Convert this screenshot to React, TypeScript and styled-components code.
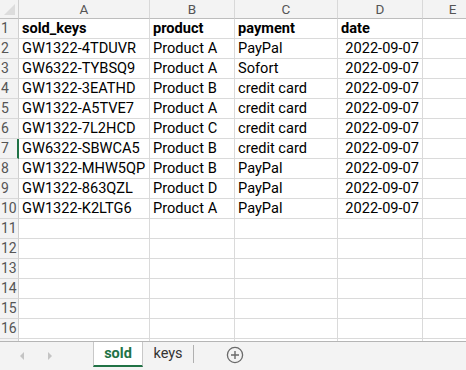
import styled, { createGlobalStyle } from "styled-components";

const GlobalStyle = createGlobalStyle`
  html, body {
    margin: 0;
    padding: 0;
    background: #ffffff;
  }
  body {
    font-family: Roboto, "Liberation Sans", Arial, sans-serif;
  }
`;

interface Sale {
  key: string;
  product: string;
  payment: string;
  date: string;
}

const rows: Sale[] = [
  { key: "GW1322-4TDUVR", product: "Product A", payment: "PayPal", date: "2022-09-07" },
  { key: "GW6322-TYBSQ9", product: "Product A", payment: "Sofort", date: "2022-09-07" },
  { key: "GW1322-3EATHD", product: "Product B", payment: "credit card", date: "2022-09-07" },
  { key: "GW1322-A5TVE7", product: "Product A", payment: "credit card", date: "2022-09-07" },
  { key: "GW1322-7L2HCD", product: "Product C", payment: "credit card", date: "2022-09-07" },
  { key: "GW6322-SBWCA5", product: "Product B", payment: "credit card", date: "2022-09-07" },
  { key: "GW1322-MHW5QP", product: "Product B", payment: "PayPal", date: "2022-09-07" },
  { key: "GW1322-863QZL", product: "Product D", payment: "PayPal", date: "2022-09-07" },
  { key: "GW1322-K2LTG6", product: "Product A", payment: "PayPal", date: "2022-09-07" },
];

const columns = ["A", "B", "C", "D", "E"];
const visibleRows = 16;

export default function App() {
  const body: (string | null)[][] = [];
  body.push(["sold_keys", "product", "payment", "date", null]);
  rows.forEach((r) => body.push([r.key, r.product, r.payment, r.date, null]));
  // one extra row that is only partly visible at the bottom edge
  while (body.length < visibleRows + 1) body.push([null, null, null, null, null]);

  return (
    <>
      <GlobalStyle />
      <Window>
        <Sheet>
          <Grid>
            <Corner>
              <svg width="18" height="18" viewBox="0 0 18 18">
                <polygon points="15,4 15,15 4,15" fill="#dcdcdc" />
              </svg>
            </Corner>
            {columns.map((c) => (
              <ColHead key={c}>{c}</ColHead>
            ))}
            {body.map((cells, i) => (
              <Row key={i}>
                <RowHead $active={i === 6}>{i < visibleRows ? i + 1 : ""}</RowHead>
                {cells.map((v, j) => (
                  <Cell key={j} $bold={i === 0} $right={i > 0 && j === 3}>
                    {v}
                  </Cell>
                ))}
              </Row>
            ))}
          </Grid>
        </Sheet>
        <TabBar>
          <Arrows>
            <svg width="8" height="10" viewBox="0 0 8 10">
              <polygon points="6,1 2,5 6,9" fill="#c4c4c4" />
            </svg>
            <svg width="8" height="10" viewBox="0 0 8 10">
              <polygon points="2,1 6,5 2,9" fill="#c4c4c4" />
            </svg>
          </Arrows>
          <Tab $active>sold</Tab>
          <Tab>keys</Tab>
          <Divider />
          <AddButton>
            <svg width="18" height="18" viewBox="0 0 18 18">
              <circle cx="9" cy="9" r="7.6" fill="none" stroke="#6a6a6a" strokeWidth="1.3" />
              <path d="M9 5v8M5 9h8" stroke="#6a6a6a" strokeWidth="1.4" />
            </svg>
          </AddButton>
        </TabBar>
      </Window>
    </>
  );
}

const Window = styled.div`
  width: 466px;
  height: 370px;
  display: flex;
  flex-direction: column;
  overflow: hidden;
  background: #ffffff;
`;

const Sheet = styled.div`
  height: 341px;
  overflow: hidden;
  border-bottom: 1px solid #b5b5b5;
`;

const Grid = styled.div`
  display: grid;
  grid-template-columns: 19px 131px 85px 103px 85px 60px;
  grid-auto-rows: 20px;
  grid-template-rows: 19px;
`;

const Row = styled.div`
  display: contents;
`;

const Corner = styled.div`
  background: #f3f3f3;
  border-right: 1px solid #cfcfcf;
  border-bottom: 1px solid #bdbdbd;
  box-sizing: border-box;
  display: flex;
`;

const ColHead = styled.div`
  background: #f3f3f3;
  border-right: 1px solid #d8d8d8;
  border-bottom: 1px solid #bdbdbd;
  box-sizing: border-box;
  color: #555555;
  font-size: 13.5px;
  line-height: 18px;
  text-align: center;
`;

const RowHead = styled.div<{ $active?: boolean }>`
  background: #f3f3f3;
  border-right: ${(p) => (p.$active ? "2px solid #217346" : "1px solid #cfcfcf")};
  border-bottom: 1px solid #d8d8d8;
  box-sizing: border-box;
  color: #555555;
  font-size: 14px;
  line-height: 19px;
  padding-left: 1px;
`;

const Cell = styled.div<{ $bold?: boolean; $right?: boolean }>`
  border-right: 1px solid #dadada;
  border-bottom: 1px solid #dadada;
  box-sizing: border-box;
  color: #000000;
  font-size: 14.6px;
  font-weight: ${(p) => (p.$bold ? 700 : 400)};
  line-height: 19px;
  padding: 0 3px;
  text-align: ${(p) => (p.$right ? "right" : "left")};
  white-space: nowrap;
  overflow: hidden;
`;

const TabBar = styled.div`
  flex: 1;
  background: #f3f3f3;
  display: flex;
  align-items: stretch;
`;

const Arrows = styled.div`
  width: 93px;
  display: flex;
  align-items: center;
  gap: 20px;
  padding-left: 18px;
  box-sizing: border-box;
`;

const Tab = styled.div<{ $active?: boolean }>`
  display: flex;
  align-items: center;
  justify-content: center;
  box-sizing: border-box;
  width: 50px;
  font-size: 14.5px;
  margin-bottom: 3px;
  color: ${(p) => (p.$active ? "#217346" : "#333333")};
  font-weight: ${(p) => (p.$active ? 700 : 400)};
  background: ${(p) => (p.$active ? "#ffffff" : "transparent")};
  border-left: ${(p) => (p.$active ? "1px solid #c8c8c8" : "none")};
  border-right: ${(p) => (p.$active ? "1px solid #c8c8c8" : "none")};
  border-bottom: ${(p) => (p.$active ? "2px solid #217346" : "2px solid transparent")};
`;

const Divider = styled.div`
  width: 1px;
  background: #b0b0b0;
  margin: 3px 0 7px;
`;

const AddButton = styled.div`
  display: flex;
  align-items: center;
  padding-left: 32px;
  margin-bottom: 2px;
`;
